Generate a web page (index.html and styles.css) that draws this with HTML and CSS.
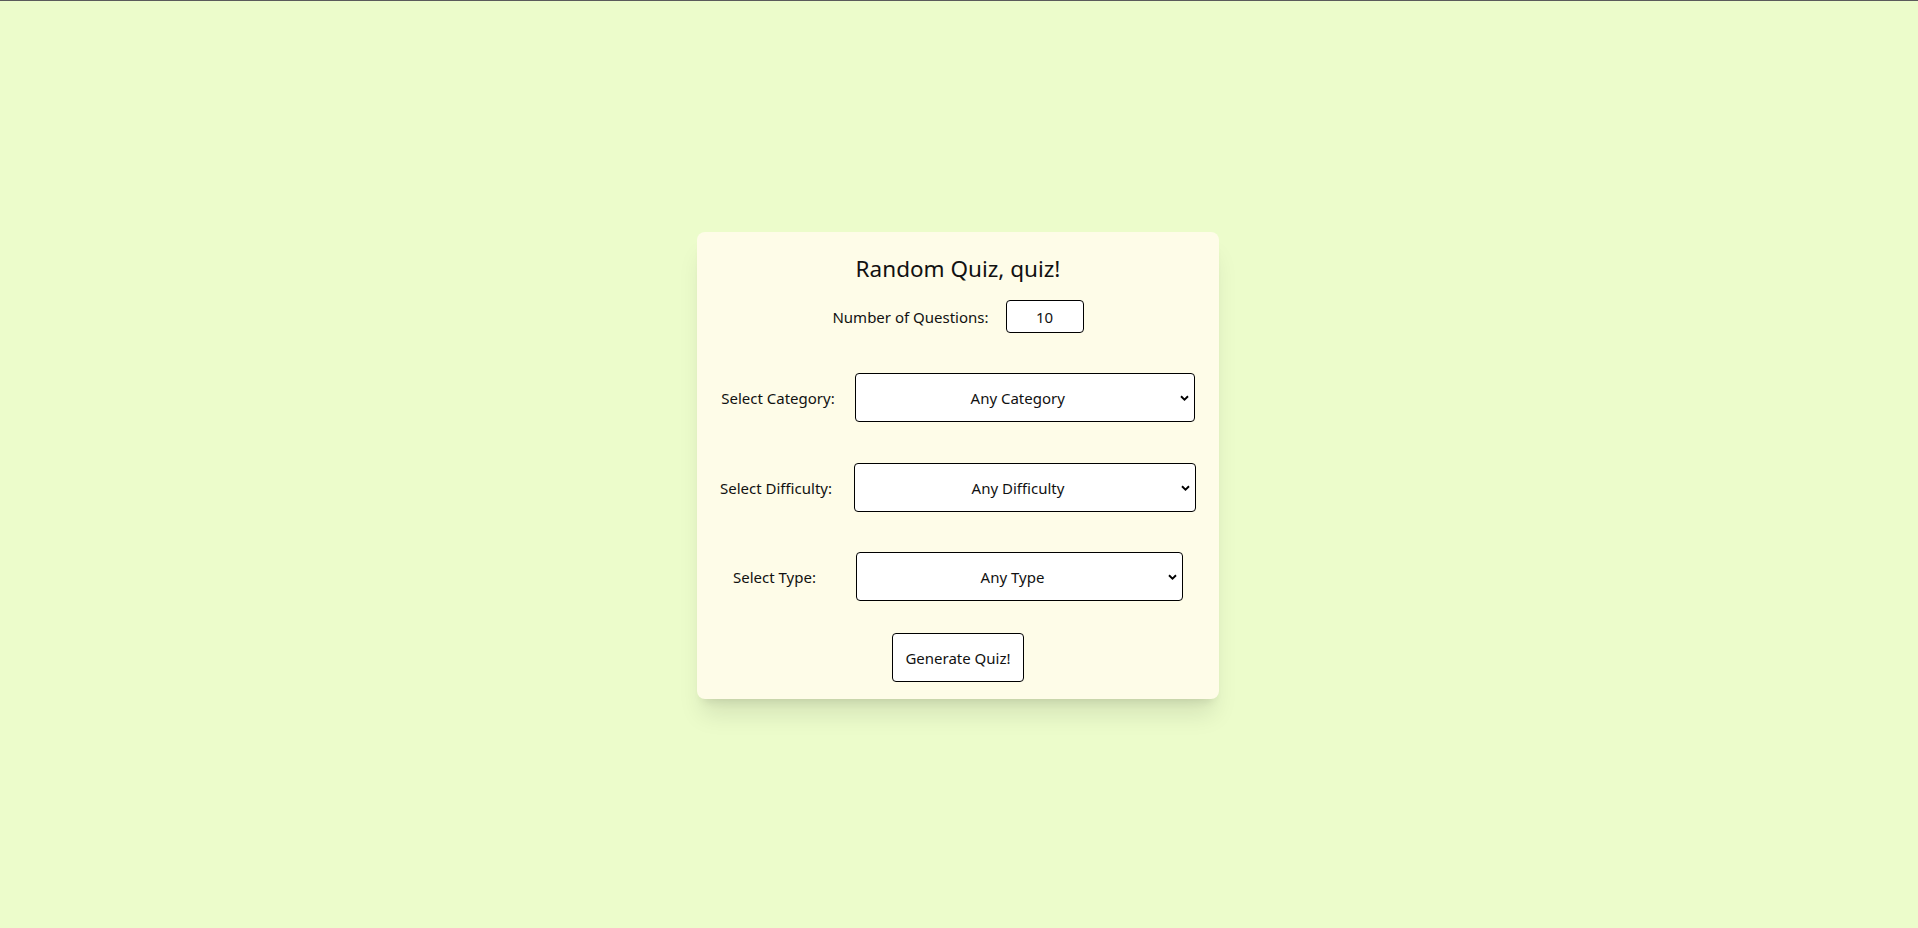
FILE: index.html
```html
<!DOCTYPE html>
<html lang="en">
<head>
<meta charset="utf-8">
<title>Random Quiz, quiz!</title>
<link rel="stylesheet" href="styles.css">
</head>
<body>
  <main class="card">
    <h1 class="title">Random Quiz, quiz!</h1>
    <div class="row row-number">
      <label class="label" for="amount">Number of Questions:</label>
      <input class="number" id="amount" type="text" value="10">
    </div>
    <div class="row row-category">
      <label class="label" for="category">Select Category:</label>
      <select class="select select-category" id="category">
        <option>Any Category</option>
      </select>
    </div>
    <div class="row row-difficulty">
      <label class="label" for="difficulty">Select Difficulty:</label>
      <select class="select select-difficulty" id="difficulty">
        <option>Any Difficulty</option>
      </select>
    </div>
    <div class="row row-type">
      <label class="label" for="type">Select Type:</label>
      <select class="select select-type" id="type">
        <option>Any Type</option>
      </select>
    </div>
    <div class="actions">
      <button class="btn" type="button">Generate Quiz!</button>
    </div>
  </main>
</body>
</html>
```
FILE: styles.css
```css
html, body {
  margin: 0;
}

body {
  box-sizing: border-box;
  min-height: 100vh;
  border-top: 1px solid #5b5b5b;
  padding: 2px 2px 0 0;
  background: #ecfccb;
  font-family: "Noto Sans", "Open Sans", sans-serif;
  font-size: 15px;
  color: #111;
  display: flex;
  align-items: center;
  justify-content: center;
}

.card {
  box-sizing: border-box;
  width: 522px;
  padding: 21px 20px 17px;
  background: #fefce8;
  border-radius: 8px;
  box-shadow: 0 20px 25px -5px rgba(0, 0, 0, 0.1), 0 8px 10px -6px rgba(0, 0, 0, 0.1);
  display: flex;
  flex-direction: column;
  align-items: center;
}

.title {
  margin: 0;
  font-size: 22.5px;
  line-height: 32px;
  font-weight: 400;
}

.row {
  display: flex;
  align-items: center;
  justify-content: center;
  margin-top: 40px;
}

.row-number {
  margin-top: 15px;
  gap: 17px;
}

.row-category { gap: 20px; }
.row-difficulty { gap: 22px; margin-top: 41px; }
.row-type { gap: 40px; }

.label {
  line-height: 20px;
}

.number {
  box-sizing: border-box;
  width: 78px;
  height: 33px;
  margin: 0;
  padding: 0 4px;
  border: 1px solid #000;
  border-radius: 4px;
  background: #fff;
  font: inherit;
  font-size: 15px;
  color: #111;
  text-align: center;
}

.select {
  box-sizing: border-box;
  height: 49px;
  margin: 0;
  padding: 0 18px 0 4px;
  border: 1px solid #000;
  border-radius: 4px;
  background-color: #fff;
  background-image: url("data:image/svg+xml,%3Csvg xmlns='http://www.w3.org/2000/svg' width='9' height='6' viewBox='0 0 9 6'%3E%3Cpath d='M1 1.2l3.5 3.4 3.5-3.4' fill='none' stroke='%23000' stroke-width='1.9'/%3E%3C/svg%3E");
  background-repeat: no-repeat;
  background-position: right 5px center;
  -webkit-appearance: none;
  appearance: none;
  font: inherit;
  font-size: 15px;
  color: #111;
  text-align: center;
  text-align-last: center;
}

.select-category { width: 340px; }
.select-difficulty { width: 342px; }
.select-type { width: 327px; }

.actions {
  margin-top: 32px;
}

.btn {
  box-sizing: border-box;
  width: 132px;
  height: 49px;
  margin: 0;
  padding: 0;
  border: 1px solid #000;
  border-radius: 4px;
  background: #fff;
  font: inherit;
  font-size: 15px;
  color: #111;
  cursor: pointer;
}
```
